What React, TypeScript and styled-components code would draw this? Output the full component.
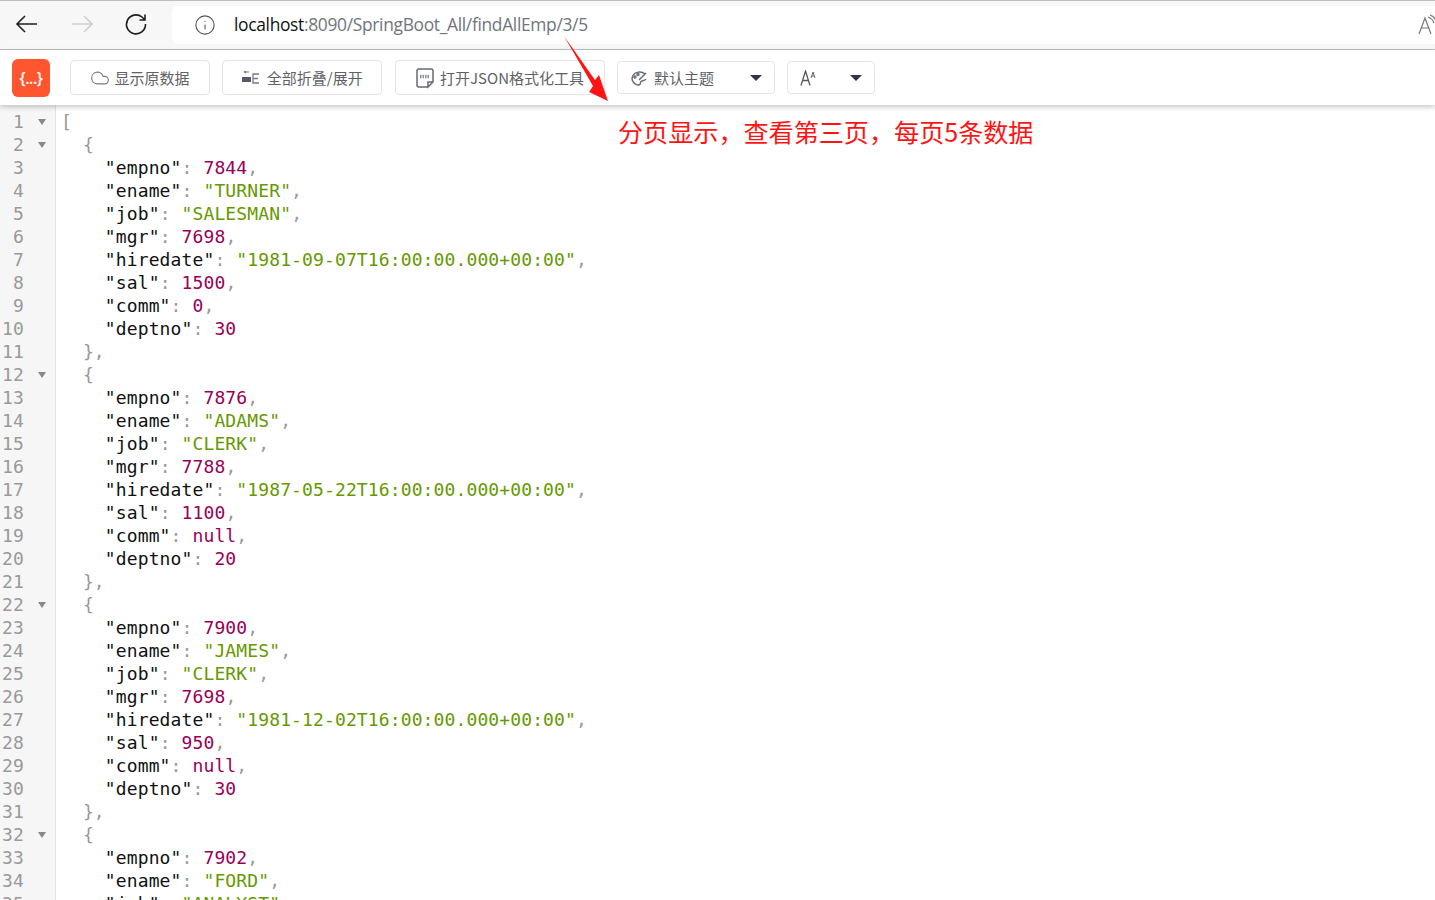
import React from "react";
import styled, { createGlobalStyle } from "styled-components";
import { Info, Cloud } from "lucide-react";

const GlobalStyle = createGlobalStyle`
  html, body {
    margin: 0;
    padding: 0;
    height: 100%;
    overflow: hidden;
    background: #fff;
  }
  #root { height: 100%; }
`;

const UI_FONT = `"Noto Sans CJK SC", "Noto Sans", sans-serif`;

const Page = styled.div`
  position: relative;
  height: 100vh;
  display: flex;
  flex-direction: column;
  overflow: hidden;
`;

const BrowserBar = styled.div`
  flex: none;
  height: 50px;
  display: flex;
  align-items: flex-start;
  padding-top: 5px;
  box-sizing: border-box;
  background: #f7f7f7;
  border-top: 1px solid #bdbdbd;
  border-bottom: 1px solid #c2c2c2;
`;

const NavGroup = styled.div`
  width: 172px;
  flex: none;
  display: flex;
  align-items: center;
  height: 36px;
  padding-left: 14px;
  box-sizing: border-box;
  gap: 29px;
`;

const NavButton = styled.svg<{ $disabled?: boolean }>`
  flex: none;
  color: ${(p) => (p.$disabled ? "#cfcfcf" : "#1f1f1f")};
`;

const AddressBox = styled.div`
  flex: 1;
  height: 38px;
  background: #fff;
  border-radius: 6px 0 0 6px;
  display: flex;
  align-items: center;
  padding-left: 22px;
  gap: 18px;
`;

const InfoIcon = styled.span`
  display: flex;
  color: #555;
`;

const Url = styled.div`
  flex: 1;
  font-family: "Open Sans", sans-serif;
  font-size: 17.4px;
  letter-spacing: -0.32px;
  color: #71757a;
  margin-top: -2px;
`;

const Host = styled.span`
  color: #111;
`;

const ReadAloud = styled.svg`
  flex: none;
  margin-right: -1px;
`;

const Toolbar = styled.div`
  position: relative;
  z-index: 2;
  flex: none;
  height: 55px;
  background: #fff;
  box-shadow: 0 2px 5px rgba(0, 0, 0, 0.22);
  display: flex;
  align-items: center;
  gap: 12.3px;
  padding-left: 12px;
`;

const Logo = styled.div`
  width: 38px;
  height: 38px;
  margin-right: 7.7px;
  border-radius: 6px;
  background: #ff5630;
  color: #fff;
  font-family: "Open Sans", sans-serif;
  font-size: 16px;
  font-weight: 600;
  letter-spacing: -0.5px;
  display: flex;
  align-items: center;
  justify-content: center;
`;

const ToolButton = styled.button<{ $width: number; $gap: number }>`
  width: ${(p) => p.$width}px;
  height: 35px;
  padding: 0;
  box-sizing: border-box;
  background: #fff;
  border: 1px solid #e4e5eb;
  border-radius: 4px;
  color: #606266;
  font-family: ${UI_FONT};
  font-size: 15px;
  display: flex;
  align-items: center;
  justify-content: center;
  gap: ${(p) => p.$gap}px;
`;

const SelectBox = styled.div<{ $width: number }>`
  width: ${(p) => p.$width}px;
  height: 33px;
  padding: 0 12px;
  box-sizing: border-box;
  background: #fff;
  border: 1px solid #e4e5eb;
  border-radius: 4px;
  color: #606266;
  font-family: ${UI_FONT};
  font-size: 15px;
  display: flex;
  align-items: center;
  gap: 6px;
`;

const Caret = styled.span`
  margin-left: auto;
  width: 0;
  height: 0;
  border-left: 6px solid transparent;
  border-right: 6px solid transparent;
  border-top: 6px solid #33334a;
`;

const Editor = styled.div`
  flex: 1;
  overflow: hidden;
  font-family: "DejaVu Sans Mono", monospace;
  font-size: 18px;
  letter-spacing: 0.12px;
  line-height: 23px;
  padding-top: 5px;
  background: linear-gradient(to right, #f6f6f6 55px, #e3e3e3 55px, #e3e3e3 56px, #fff 56px);
`;

const Row = styled.div`
  display: flex;
  height: 23px;
  white-space: pre;
`;

const LineNumber = styled.div`
  width: 24px;
  flex: none;
  text-align: right;
  color: #999;
`;

const FoldCell = styled.div`
  width: 38px;
  flex: none;
  display: flex;
  align-items: center;
  padding-left: 14px;
  box-sizing: border-box;
`;

const FoldArrow = styled.span`
  width: 0;
  height: 0;
  border-left: 4px solid transparent;
  border-right: 4px solid transparent;
  border-top: 6px solid #888;
`;

const CodeText = styled.span`
  margin-left: -1px;
`;

const Token = styled.span<{ $kind: "key" | "punct" | "num" | "str" }>`
  color: ${(p) =>
    p.$kind === "key"
      ? "#111"
      : p.$kind === "num"
      ? "#990055"
      : p.$kind === "str"
      ? "#669900"
      : "#999"};
`;

const NoteArrow = styled.svg`
  position: absolute;
  z-index: 3;
  left: 560px;
  top: 32px;
`;

const Note = styled.div`
  position: absolute;
  z-index: 3;
  left: 618px;
  top: 113px;
  color: #ff1414;
  font-family: ${UI_FONT};
  font-size: 25.1px;
  line-height: 36px;
  white-space: nowrap;
`;

type Emp = {
  empno: number;
  ename: string;
  job: string;
  mgr: number;
  hiredate: string;
  sal: number;
  comm: number | null;
  deptno: number;
};

const emps: Emp[] = [
  { empno: 7844, ename: "TURNER", job: "SALESMAN", mgr: 7698, hiredate: "1981-09-07T16:00:00.000+00:00", sal: 1500, comm: 0, deptno: 30 },
  { empno: 7876, ename: "ADAMS", job: "CLERK", mgr: 7788, hiredate: "1987-05-22T16:00:00.000+00:00", sal: 1100, comm: null, deptno: 20 },
  { empno: 7900, ename: "JAMES", job: "CLERK", mgr: 7698, hiredate: "1981-12-02T16:00:00.000+00:00", sal: 950, comm: null, deptno: 30 },
  { empno: 7902, ename: "FORD", job: "ANALYST", mgr: 7566, hiredate: "1981-12-03T16:00:00.000+00:00", sal: 3000, comm: null, deptno: 20 },
];

type Line = { fold?: boolean; content: React.ReactNode };

const buildLines = (): Line[] => {
  const lines: Line[] = [{ fold: true, content: <Token $kind="punct">[</Token> }];
  emps.forEach((emp, i) => {
    lines.push({ fold: true, content: <Token $kind="punct">{"  {"}</Token> });
    const keys = Object.keys(emp) as (keyof Emp)[];
    keys.forEach((key, k) => {
      const value = emp[key];
      const isStr = typeof value === "string";
      lines.push({
        content: (
          <>
            <Token $kind="key">{`    "${key}"`}</Token>
            <Token $kind="punct">: </Token>
            <Token $kind={isStr ? "str" : "num"}>{isStr ? `"${value}"` : String(value)}</Token>
            {k < keys.length - 1 && <Token $kind="punct">,</Token>}
          </>
        ),
      });
    });
    lines.push({ content: <Token $kind="punct">{i < emps.length - 1 ? "  }," : "  }"}</Token> });
  });
  return lines;
};

export default function App() {
  const lines = buildLines();

  return (
    <Page>
      <GlobalStyle />
      <BrowserBar>
        <NavGroup>
          <NavButton width="26" height="26" viewBox="0 0 26 26" fill="none" stroke="currentColor" strokeWidth="1.6">
            <path d="M23 13 H3 M11 5 L3 13 L11 21" />
          </NavButton>
          <NavButton $disabled width="26" height="26" viewBox="0 0 26 26" fill="none" stroke="currentColor" strokeWidth="1.6">
            <path d="M3 13 H23 M15 5 L23 13 L15 21" />
          </NavButton>
          <NavButton width="24" height="24" viewBox="0 0 24 24" fill="none" stroke="currentColor" strokeWidth="1.6">
            <path d="M21.5 12 A9.5 9.5 0 1 1 18 5 L21 8 M21 2.5 V8 H15.5" />
          </NavButton>
        </NavGroup>
        <AddressBox>
          <InfoIcon>
            <Info size={22} strokeWidth={1.2} />
          </InfoIcon>
          <Url>
            <Host>localhost</Host>:8090/SpringBoot_All/findAllEmp/3/5
          </Url>
          <ReadAloud width="18" height="22" viewBox="0 0 18 22" fill="none" stroke="#777" strokeWidth="1.2">
            <path d="M1 20 L7 4 L13 20 M3.5 14 H10.5" />
            <path d="M10 3 C13 4 15 6 16 9 M12 1 C15 2 17 4 18 7" />
          </ReadAloud>
        </AddressBox>
      </BrowserBar>

      <Toolbar>
        <Logo>{"{...}"}</Logo>
        <ToolButton $width={140} $gap={4}>
          <Cloud size={20} strokeWidth={1.4} color="#777b86" />
          显示原数据
        </ToolButton>
        <ToolButton $width={160} $gap={7}>
          <svg width="18" height="14" viewBox="0 0 18 14" fill="none">
            <path d="M2 1 H7 M2 1 L4 0 M2 1 L4 2" stroke="#777b86" strokeWidth="1.2" />
            <rect x="0" y="6" width="9" height="5" fill="#555865" />
            <path d="M17 3 H11 V12 H17 M11 7.5 H16" stroke="#777b86" strokeWidth="1.3" />
          </svg>
          全部折叠/展开
        </ToolButton>
        <ToolButton $width={210} $gap={5}>
          <svg width="20" height="22" viewBox="0 0 20 22" fill="none" stroke="#666a75" strokeWidth="1.5">
            <path d="M13 20 H4 A2 2 0 0 1 2 18 V4 A2 2 0 0 1 4 2 H16 A2 2 0 0 1 18 4 V15 L13 20 V15 H18" />
            <path d="M5 9.5 H15" strokeWidth="3.5" strokeDasharray="1.5 1" opacity="0.75" />
          </svg>
          打开JSON格式化工具
        </ToolButton>
        <SelectBox $width={158}>
          <svg width="18" height="16" viewBox="0 0 18 16" fill="none" stroke="#666a75" strokeWidth="1.4">
            <path d="M15 4 A7.5 6.5 0 1 0 9 15 C11 15 10 12.5 11 11.5 C12 10.5 15 11 16 9" />
            <circle cx="5" cy="7" r="1" />
            <circle cx="8" cy="4.5" r="1" />
            <path d="M9 10 L16 3" />
          </svg>
          默认主题
          <Caret />
        </SelectBox>
        <SelectBox $width={88}>
          <svg width="17" height="16" viewBox="0 0 17 16" fill="none" stroke="#555865" strokeWidth="1.3">
            <path d="M1 15.5 L5.5 1 L10 15.5 M2.5 10.5 H8.5" />
            <path d="M11 8 L13 2 L15 8 M11.8 6 H14.2" strokeWidth="0.9" />
          </svg>
          <Caret />
        </SelectBox>
      </Toolbar>

      <Editor>
        {lines.map((line, i) => (
          <Row key={i}>
            <LineNumber>{i + 1}</LineNumber>
            <FoldCell>{line.fold && <FoldArrow />}</FoldCell>
            <CodeText>{line.content}</CodeText>
          </Row>
        ))}
      </Editor>

      <NoteArrow width="54" height="74" viewBox="0 0 54 74">
        <path d="M4 4 L35 48 L39 43 L48 69 L29 60 L33 54 Z" fill="#ff1414" />
      </NoteArrow>
      <Note>分页显示，查看第三页，每页5条数据</Note>
    </Page>
  );
}
